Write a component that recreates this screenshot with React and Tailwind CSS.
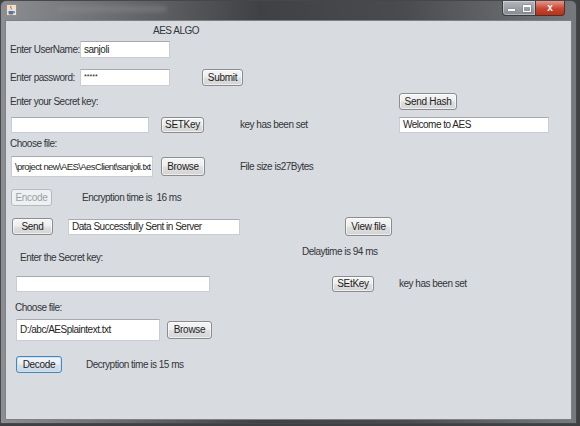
const FONT = { fontFamily: '"Liberation Sans", Arial, sans-serif' };

function Btn({ children, w, h = 17, disabled, focused, className = "" }) {
  let tone =
    "border-[#8a8c8f] bg-[linear-gradient(#f5f5f5_0%,#eeeeee_48%,#e0e0e0_52%,#d4d4d4_100%)] text-[#1c1c1c] shadow-[inset_0_0_0_1px_rgba(255,255,255,0.6)]";
  if (disabled) tone = "border-[#b6babe] bg-[#eef0f2] text-[#9a9ea2]";
  if (focused)
    tone =
      "border-[#4b86b4] bg-[linear-gradient(#f3f6fa_0%,#e8eef5_48%,#d8e1ea_52%,#ccd6e2_100%)] text-[#1c1c1c] shadow-[inset_0_0_0_1px_#c5e2f6]";
  return (
    <div
      className={`flex shrink-0 items-center justify-center rounded-[3px] border text-[10px] leading-none tracking-[-0.3px] ${tone} ${className}`}
      style={{ width: w, height: h }}
    >
      {children}
    </div>
  );
}

function Field({ children, w, h = 16, className = "", textClass = "text-[10px] tracking-[-0.5px]" }) {
  return (
    <div
      className={`flex shrink-0 items-center overflow-hidden whitespace-nowrap border border-[#c9cdd3] border-t-[#a6aab0] bg-white pl-[3px] leading-none text-[#262626] ${className}`}
      style={{ width: w, height: h }}
    >
      <span className={textClass}>{children}</span>
    </div>
  );
}

function Label({ children, className = "" }) {
  return (
    <span
      className={`shrink-0 whitespace-nowrap text-[10px] leading-none tracking-[-0.5px] text-[#333538] ${className}`}
    >
      {children}
    </span>
  );
}

function JavaIcon() {
  return (
    <svg width="11" height="12" viewBox="0 0 11 12">
      <rect x="0.5" y="0.5" width="10" height="11" fill="#e9e3d6" stroke="#9a8f7e" />
      <path d="M5 2 C3.5 3.5 6.5 4 5 5.5" stroke="#d9482b" strokeWidth="1" fill="none" />
      <path d="M2.5 7 h5 v2 a1.5 1.5 0 0 1 -1.5 1.5 h-2 a1.5 1.5 0 0 1 -1.5 -1.5 z" fill="#4f77a8" />
      <path d="M7.5 7.5 h1 v1.2 h-1" stroke="#4f77a8" fill="none" strokeWidth="0.8" />
    </svg>
  );
}

export default function App() {
  return (
    <div className="h-[426px] w-[580px] overflow-hidden bg-[#3f4042]" style={FONT}>
      <div className="h-[424px] w-[577px] rounded-t-[6px] border border-[#45474a] bg-[linear-gradient(90deg,#8c8e92_0%,#6a6c70_20%,#404144_45%,#4a4b4e_70%,#76797d_100%)]">
        {/* title bar */}
        <div className="flex h-[19px] items-start">
          <div className="ml-[5px] mt-[3px]">
            <JavaIcon />
          </div>
          <div className="ml-[40px] mt-[5px] h-[6px] w-[110px] rounded-full bg-[#8d8f93] opacity-40 blur-[2px]" />
          <div className="ml-auto mr-[11px] flex h-[15px]">
            <div className="flex w-[34px] items-center rounded-bl-[4px] border border-t-0 border-[#3a3c40] bg-[linear-gradient(#b3b7bd,#868a90)] shadow-[inset_0_0_0_1px_rgba(255,255,255,0.35)]">
              <div className="flex w-[17px] justify-center pt-[4px]">
                <div className="h-[2px] w-[7px] bg-white shadow-[0_0_1px_#333]" />
              </div>
              <div className="flex w-[17px] justify-center">
                <div className="h-[7px] w-[8px] border border-t-2 border-white shadow-[0_0_1px_#333]" />
              </div>
            </div>
            <div className="flex w-[29px] items-center justify-center rounded-br-[4px] border border-l-0 border-t-0 border-[#5a2a22] bg-[linear-gradient(#e8988b,#c8452f_55%,#b3331d)] text-[10px] font-bold leading-none text-white">
              x
            </div>
          </div>
        </div>

        {/* content panel */}
        <div className="mx-[4px] h-[400px] border border-[#7d8187] bg-[#d8dbe0]">
          <div className="mt-[4px] flex h-[12px] items-center">
            <Label className="ml-[147px]">AES ALGO</Label>
          </div>

          <div className="mt-[4px] flex h-[17px] items-center">
            <Label className="ml-[4px] w-[70px]">Enter UserName:</Label>
            <Field w={90} h={17}>sanjoli</Field>
          </div>

          <div className="mt-[11px] flex h-[17px] items-center">
            <Label className="ml-[4px] w-[70px]">Enter password:</Label>
            <Field w={90} h={17} textClass="mb-[3px] text-[7px] tracking-[0px]">*****</Field>
            <Btn w={41} className="ml-[32px]">Submit</Btn>
          </div>

          <div className="mt-[7px] flex h-[17px] items-center">
            <Label className="ml-[4px] w-[389px]">Enter your Secret key:</Label>
            <Btn w={58}>Send Hash</Btn>
          </div>

          <div className="mt-[7px] flex h-[16px] items-center">
            <Field w={138} className="ml-[5px]" />
            <Btn w={43} h={16} className="ml-[12px]">SETKey</Btn>
            <Label className="ml-[36px] w-[159px]">key has been set</Label>
            <Field w={150}>Welcome to AES</Field>
          </div>

          <div className="mt-[6px] flex h-[10px] items-center">
            <Label className="ml-[4px]">Choose file:</Label>
          </div>

          <div className="mt-[7px] flex h-[21px] items-center">
            <Field w={142} h={21} className="ml-[5px] pl-[1px]" textClass="text-[9.5px] tracking-[-0.6px]">
              \project new\AES\AesClient\sanjoli.txt
            </Field>
            <Btn w={44} h={19} className="ml-[8px]">Browse</Btn>
            <Label className="ml-[35px]">File size is27Bytes</Label>
          </div>

          <div className="mt-[12px] flex h-[17px] items-center">
            <Btn w={41} disabled className="ml-[5px]">Encode</Btn>
            <Label className="ml-[30px]">Encryption time is&nbsp;&nbsp;16 ms</Label>
          </div>

          <div className="mt-[11px] flex h-[19px] items-center">
            <Btn w={41} className="ml-[6px]">Send</Btn>
            <Field w={172} className="ml-[15px]">Data Successfully Sent in Server</Field>
            <Btn w={47} h={19} className="ml-[105px]">View file</Btn>
          </div>

          <div className="mt-[10px] flex h-[17px] items-start">
            <Label className="ml-[14px] mt-[7px] w-[282px]">Enter the Secret key:</Label>
            <Label className="mt-[1px]">Delaytime is 94 ms</Label>
          </div>

          <div className="mt-[13px] flex h-[16px] items-center">
            <Field w={194} className="ml-[10px]" />
            <Btn w={42} h={16} className="ml-[122px]">SEtKey</Btn>
            <Label className="ml-[25px]">key has been set</Label>
          </div>

          <div className="mt-[11px] flex h-[10px] items-center">
            <Label className="ml-[9px]">Choose file:</Label>
          </div>

          <div className="mt-[6px] flex h-[22px] items-center">
            <Field w={144} h={22} className="ml-[10px]">D:/abc/AESplaintext.txt</Field>
            <Btn w={45} h={18} className="ml-[7px]">Browse</Btn>
          </div>

          <div className="mt-[15px] flex h-[17px] items-center">
            <Btn w={46} focused className="ml-[10px]">Decode</Btn>
            <Label className="ml-[24px]">Decryption time is 15 ms</Label>
          </div>
        </div>
      </div>
    </div>
  );
}
